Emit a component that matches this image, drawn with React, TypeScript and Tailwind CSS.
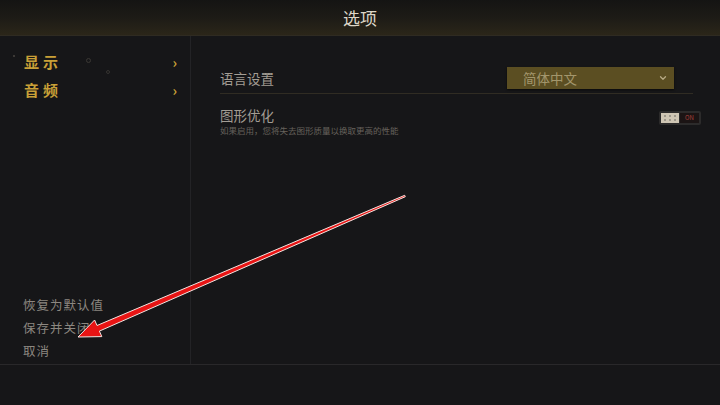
import { ChevronDown } from "lucide-react";

const cjk = { fontFamily: '"Noto Sans CJK SC", "Noto Sans", sans-serif' };

function SideItem({ label }: { label: string }) {
  return (
    <div className="flex items-center justify-between h-[28px] pl-[24px] pr-[13px]">
      <span className="text-[15px] font-bold tracking-[4px] text-[#c9a037]">{label}</span>
      <span className="text-[14px] font-bold text-[#c9a037]">›</span>
    </div>
  );
}

function Toggle() {
  return (
    <div className="flex h-[14px] w-[42px] rounded-[2px] bg-[#2c2b2b] p-[2px] gap-[1px]">
      <div className="grid grid-cols-3 place-items-center w-[18px] bg-[#cfc6b4] px-[2px] py-[1px]">
        {Array.from({ length: 6 }).map((_, i) => (
          <span key={i} className="h-[2px] w-[2px] rounded-full bg-[#8d877c]" />
        ))}
      </div>
      <div className="flex flex-1 items-center justify-center bg-[#1b1414] text-[6px] leading-none text-[#a8403a]">
        ON
      </div>
    </div>
  );
}

export default function App() {
  return (
    <div className="relative h-[405px] w-[720px] overflow-hidden bg-[#161618] text-[#a39d94]" style={cjk}>
      {/* header */}
      <div className="flex h-[36px] items-center justify-center border-b border-[#2f2b22] bg-gradient-to-b from-[#141413] via-[#1d1b16] to-[#2b2619]">
        <span className="text-[17px] text-[#ddd6c8]">选项</span>
      </div>

      <div className="flex h-[329px] border-b border-[#29282a]">
        {/* sidebar */}
        <div className="relative flex w-[191px] flex-col justify-between border-r border-[#232326] pt-[12px] pb-[2px]">
          <span className="absolute left-[86px] top-[22px] h-[5px] w-[5px] rounded-full border border-[#3a3834]" />
          <span className="absolute left-[106px] top-[34px] h-[4px] w-[4px] rounded-full border border-[#353330]" />
          <span className="absolute left-[13px] top-[19px] h-[2px] w-[2px] rounded-full bg-[#4a4640]" />
          <div className="flex flex-col">
            <SideItem label="显示" />
            <SideItem label="音频" />
          </div>
          <div className="flex flex-col pl-[23px] text-[12.5px] tracking-[1px] text-[#8c8780]">
            <span className="h-[23px] leading-[23px]">恢复为默认值</span>
            <span className="h-[23px] leading-[23px]">保存并关闭</span>
            <span className="h-[23px] leading-[23px]">取消</span>
          </div>
        </div>

        {/* content */}
        <div className="flex flex-1 flex-col pl-[29px] pr-[27px] pt-[31px]">
          <div className="flex items-center justify-between border-b border-[#302c23] pb-[4px] pr-[19px]">
            <span className="text-[13.5px] text-[#a39d94]">语言设置</span>
            <div className="flex h-[22px] w-[167px] items-center justify-between bg-[#5b4e22] pl-[16px] pr-[6px] shadow-[0_1px_2px_rgba(0,0,0,0.6)]">
              <span className="text-[13.5px] text-[#a3966c]">简体中文</span>
              <ChevronDown className="h-[10px] w-[10px] text-[#b8ab85]" strokeWidth={3} />
            </div>
          </div>
          <div className="mt-[12px] flex items-start justify-between">
            <div className="flex flex-col">
              <span className="text-[13.5px] leading-[19px] text-[#a39d94]">图形优化</span>
              <span className="text-[8.5px] leading-[10px] text-[#66625c]">如果启用，您将失去图形质量以换取更高的性能</span>
            </div>
            <div className="mt-[5px] -mr-[8px]">
              <Toggle />
            </div>
          </div>
        </div>
      </div>

      {/* annotation arrow */}
      <svg className="pointer-events-none absolute left-0 top-0" width="720" height="405" viewBox="0 0 720 405">
        <polygon
          points="405.3,196.7 99.4,331.1 101.8,336.6 78,337 94.6,320 97,325.5 404.7,195.3"
          fill="#e81414"
          stroke="#f4e4e0"
          strokeWidth="1"
          strokeLinejoin="miter"
        />
      </svg>
    </div>
  );
}
